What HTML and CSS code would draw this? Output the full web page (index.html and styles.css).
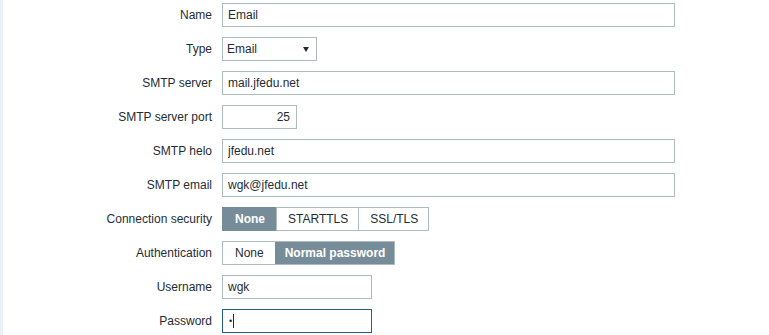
FILE: index.html
```html
<!DOCTYPE html>
<html lang="en">

<head>
    <meta charset="UTF-8">
    <title>Media type</title>
    <link rel="stylesheet" href="styles.css">
</head>

<body>
    <div class="page">
        <form class="form-grid">
            <label class="form-label" for="name">Name</label>
            <div class="form-field"><input class="input input-wide" id="name" type="text" value="Email"></div>

            <label class="form-label" for="type">Type</label>
            <div class="form-field">
                <span class="select-wrap">
                    <select class="select" id="type">
                        <option>Email</option>
                    </select>
                </span>
            </div>

            <label class="form-label" for="smtp_server">SMTP server</label>
            <div class="form-field"><input class="input input-wide" id="smtp_server" type="text" value="mail.jfedu.net"></div>

            <label class="form-label" for="smtp_port">SMTP server port</label>
            <div class="form-field"><input class="input input-port" id="smtp_port" type="text" value="25"></div>

            <label class="form-label" for="smtp_helo">SMTP helo</label>
            <div class="form-field"><input class="input input-wide" id="smtp_helo" type="text" value="jfedu.net"></div>

            <label class="form-label" for="smtp_email">SMTP email</label>
            <div class="form-field"><input class="input input-wide" id="smtp_email" type="text" value="wgk@jfedu.net"></div>

            <span class="form-label">Connection security</span>
            <div class="form-field">
                <div class="segmented">
                    <span class="segment active">None</span>
                    <span class="segment">STARTTLS</span>
                    <span class="segment">SSL/TLS</span>
                </div>
            </div>

            <span class="form-label">Authentication</span>
            <div class="form-field">
                <div class="segmented">
                    <span class="segment">None</span>
                    <span class="segment active">Normal password</span>
                </div>
            </div>

            <label class="form-label" for="username">Username</label>
            <div class="form-field"><input class="input input-mid" id="username" type="text" value="wgk"></div>

            <span class="form-label">Password</span>
            <div class="form-field">
                <div class="input input-mid input-focus"><span class="dot">•</span><span class="caret"></span></div>
            </div>
        </form>
    </div>
</body>

</html>
```

FILE: styles.css
```css
html,
body {
    margin: 0;
    padding: 0;
    background-color: #fff;
}

body {
    font-family: "Liberation Sans", Arial, sans-serif;
    font-size: 12px;
    color: #1f2c33;
}

.page {
    border-left: 3px solid #eef1f3;
    min-height: 335px;
    box-sizing: border-box;
}

.form-grid {
    display: grid;
    grid-template-columns: 209px 1fr;
    column-gap: 10px;
    row-gap: 10px;
    padding-top: 3px;
    margin: 0;
}

.form-label {
    text-align: right;
    line-height: 24px;
    height: 24px;
}

.form-field {
    display: flex;
    align-items: center;
    height: 24px;
}

.input,
.select {
    height: 24px;
    box-sizing: border-box;
    border: 1px solid #acbbc0;
    background-color: #fff;
    font-family: inherit;
    font-size: 12px;
    color: #1f2c33;
    padding: 0 5px;
    margin: 0;
    outline: none;
    border-radius: 0;
}

.input-wide {
    width: 453px;
}

.input-port {
    width: 75px;
    text-align: right;
    padding-right: 6px;
}

.input-mid {
    width: 150px;
}

.input-focus {
    border-color: #1f5f8f;
    display: flex;
    align-items: center;
}

.dot {
    font-size: 9px;
    line-height: 1;
    margin-left: 1px;
}

.caret {
    display: inline-block;
    width: 1px;
    height: 14px;
    background-color: #1f2c33;
    margin-left: 1px;
}

.select-wrap {
    position: relative;
    display: inline-block;
}

.select {
    -webkit-appearance: none;
    appearance: none;
    width: 95px;
    padding-left: 4px;
}

.select-wrap::after {
    content: "";
    position: absolute;
    top: 10px;
    right: 8px;
    border-left: 3px solid transparent;
    border-right: 3px solid transparent;
    border-top: 5px solid #1f2c33;
    pointer-events: none;
}

.segmented {
    display: flex;
    height: 24px;
    border: 1px solid #acbbc0;
    box-sizing: border-box;
}

.segment {
    display: flex;
    align-items: center;
    padding: 0 10px 0 11px;
    border-left: 1px solid #acbbc0;
    color: #1f2c33;
}

.segment:first-child {
    border-left: none;
    padding: 0 11px 0 12px;
}

.segment.active {
    background-color: #768d99;
    color: #fff;
    font-weight: bold;
    border-left-color: #768d99;
    padding: 0 9px;
}

.segmented .segment.active:first-child {
    margin: -1px 0 -1px -1px;
    padding: 0 11px 0 13px;
}
```
